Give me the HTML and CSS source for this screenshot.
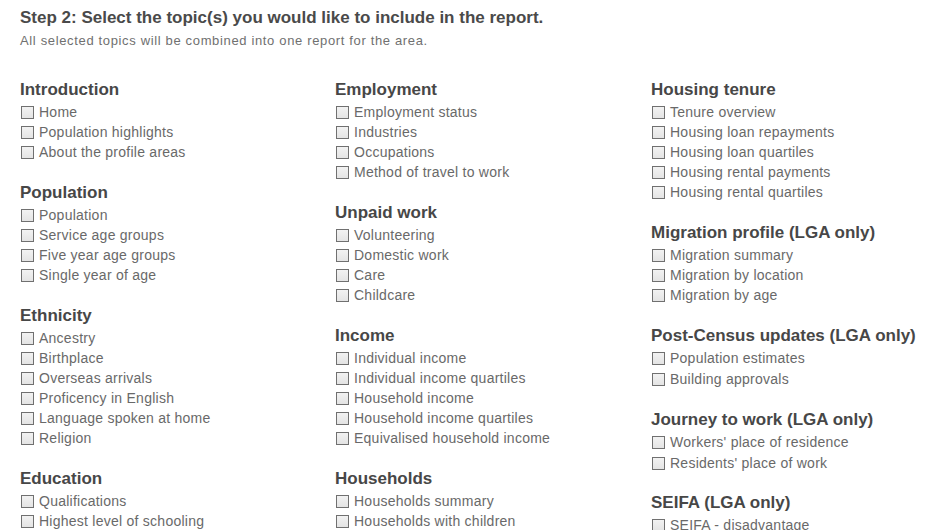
FILE: index.html
```html
<!DOCTYPE html>
<html>
<head>
<meta charset="utf-8">
<link rel="stylesheet" href="styles.css">
</head>
<body>
<div class="page">
  <h1 class="title">Step 2: Select the topic(s) you would like to include in the report.</h1>
  <p class="subtitle">All selected topics will be combined into one report for the area.</p>
  <div class="columns">
    <div class="col">
      <div class="section">
        <h2>Introduction</h2>
        <ul>
          <li><span class="cb"></span>Home</li>
          <li><span class="cb"></span>Population highlights</li>
          <li><span class="cb"></span>About the profile areas</li>
        </ul>
      </div>
      <div class="section">
        <h2>Population</h2>
        <ul>
          <li><span class="cb"></span>Population</li>
          <li><span class="cb"></span>Service age groups</li>
          <li><span class="cb"></span>Five year age groups</li>
          <li><span class="cb"></span>Single year of age</li>
        </ul>
      </div>
      <div class="section">
        <h2>Ethnicity</h2>
        <ul>
          <li><span class="cb"></span>Ancestry</li>
          <li><span class="cb"></span>Birthplace</li>
          <li><span class="cb"></span>Overseas arrivals</li>
          <li><span class="cb"></span>Proficency in English</li>
          <li><span class="cb"></span>Language spoken at home</li>
          <li><span class="cb"></span>Religion</li>
        </ul>
      </div>
      <div class="section">
        <h2>Education</h2>
        <ul>
          <li><span class="cb"></span>Qualifications</li>
          <li><span class="cb"></span>Highest level of schooling</li>
        </ul>
      </div>
    </div>
    <div class="col">
      <div class="section">
        <h2>Employment</h2>
        <ul>
          <li><span class="cb"></span>Employment status</li>
          <li><span class="cb"></span>Industries</li>
          <li><span class="cb"></span>Occupations</li>
          <li><span class="cb"></span>Method of travel to work</li>
        </ul>
      </div>
      <div class="section">
        <h2>Unpaid work</h2>
        <ul>
          <li><span class="cb"></span>Volunteering</li>
          <li><span class="cb"></span>Domestic work</li>
          <li><span class="cb"></span>Care</li>
          <li><span class="cb"></span>Childcare</li>
        </ul>
      </div>
      <div class="section">
        <h2>Income</h2>
        <ul>
          <li><span class="cb"></span>Individual income</li>
          <li><span class="cb"></span>Individual income quartiles</li>
          <li><span class="cb"></span>Household income</li>
          <li><span class="cb"></span>Household income quartiles</li>
          <li><span class="cb"></span>Equivalised household income</li>
        </ul>
      </div>
      <div class="section">
        <h2>Households</h2>
        <ul>
          <li><span class="cb"></span>Households summary</li>
          <li><span class="cb"></span>Households with children</li>
        </ul>
      </div>
    </div>
    <div class="col">
      <div class="section">
        <h2>Housing tenure</h2>
        <ul>
          <li><span class="cb"></span>Tenure overview</li>
          <li><span class="cb"></span>Housing loan repayments</li>
          <li><span class="cb"></span>Housing loan quartiles</li>
          <li><span class="cb"></span>Housing rental payments</li>
          <li><span class="cb"></span>Housing rental quartiles</li>
        </ul>
      </div>
      <div class="section">
        <h2>Migration profile (LGA only)</h2>
        <ul>
          <li><span class="cb"></span>Migration summary</li>
          <li><span class="cb"></span>Migration by location</li>
          <li><span class="cb"></span>Migration by age</li>
        </ul>
      </div>
      <div class="section">
        <h2>Post-Census updates (LGA only)</h2>
        <ul class="tight">
          <li><span class="cb"></span>Population estimates</li>
          <li><span class="cb"></span>Building approvals</li>
        </ul>
      </div>
      <div class="section short">
        <h2>Journey to work (LGA only)</h2>
        <ul class="tight">
          <li><span class="cb"></span>Workers' place of residence</li>
          <li><span class="cb"></span>Residents' place of work</li>
        </ul>
      </div>
      <div class="section">
        <h2>SEIFA (LGA only)</h2>
        <ul>
          <li><span class="cb"></span>SEIFA - disadvantage</li>
        </ul>
      </div>
    </div>
  </div>
</div>
</body>
</html>
```
FILE: styles.css
```css
html, body {
  margin: 0;
  padding: 0;
  background: #fff;
}
body {
  font-family: "Liberation Sans", Arial, sans-serif;
  color: #555;
  overflow: hidden;
  height: 530px;
}
.page {
  padding: 8px 0 0 20px;
}
.title {
  margin: 0;
  font-size: 17px;
  line-height: 20px;
  font-weight: bold;
  color: #4a4a4a;
}
.subtitle {
  margin: 5px 0 0;
  font-size: 13px;
  line-height: 16px;
  color: #707070;
  letter-spacing: 0.65px;
}
.columns {
  display: grid;
  grid-template-columns: 315px 316px 1fr;
  margin-top: 30px;
}
.section {
  margin-bottom: 20px;
}
.section.short {
  margin-bottom: 19px;
}
.section h2 {
  margin: 0 0 1px;
  font-size: 17px;
  line-height: 22px;
  font-weight: bold;
  color: #474747;
}
.section ul {
  list-style: none;
  margin: 0;
  padding: 0;
}
.section li {
  display: flex;
  align-items: center;
  height: 20px;
  font-size: 14px;
  letter-spacing: 0.25px;
  color: #696969;
}
.section ul.tight li {
  height: 20.5px;
}
.cb {
  display: inline-block;
  box-sizing: border-box;
  width: 13px;
  height: 13px;
  margin: 1px 5px 0 1px;
  border: 1px solid #707070;
  background: linear-gradient(#f2f2f2, #e4e4e4);
  flex: none;
}
```
